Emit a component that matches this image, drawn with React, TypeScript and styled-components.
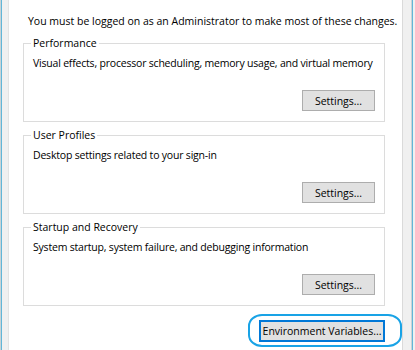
import React from 'react';
import styled, { createGlobalStyle } from 'styled-components';

const GlobalStyle = createGlobalStyle`
  html, body {
    margin: 0;
    padding: 0;
    background: #f0f0f0;
  }
  body {
    font-family: "Open Sans", "Noto Sans", "Liberation Sans", sans-serif;
    font-size: 10.5px;
    color: #000;
  }
`;

interface Section {
  title: string;
  description: string;
}

const sections: Section[] = [
  {
    title: 'Performance',
    description: 'Visual effects, processor scheduling, memory usage, and virtual memory',
  },
  {
    title: 'User Profiles',
    description: 'Desktop settings related to your sign-in',
  },
  {
    title: 'Startup and Recovery',
    description: 'System startup, system failure, and debugging information',
  },
];

const App: React.FC = () => {
  return (
    <>
      <GlobalStyle />
      <Screen>
        <DesktopEdge />
        <Gutter $width={6} />
        <Sheet>
          <Notice>You must be logged on as an Administrator to make most of these changes.</Notice>
          {sections.map((s) => (
            <GroupBox key={s.title}>
              <GroupTitle>{s.title}</GroupTitle>
              <Description>{s.description}</Description>
              <ButtonRow>
                <Button>Settings...</Button>
              </ButtonRow>
            </GroupBox>
          ))}
          <FooterRow>
            <Highlight>
              <DefaultButton>Environment Variables...</DefaultButton>
            </Highlight>
          </FooterRow>
        </Sheet>
        <Gutter $width={8} />
        <DesktopEdge />
        <Gutter $width={2} />
      </Screen>
    </>
  );
};

export default App;

const Screen = styled.div`
  display: flex;
  height: 350px;
  overflow: hidden;
  background: #f0f0f0;
`;

const DesktopEdge = styled.div`
  width: 1px;
  flex: none;
  background: #62b6d8;
  border-left: 1px solid #c9d3d6;
`;

const Gutter = styled.div<{ $width: number }>`
  width: ${(p) => p.$width}px;
  flex: none;
  background: #f0f0f0;
`;

const Sheet = styled.div`
  flex: 1;
  min-width: 0;
  display: flex;
  flex-direction: column;
  background: #fff;
  border-left: 1px solid #e3e3e3;
  border-right: 1px solid #dadada;
  padding: 14px 17px 0 14px;
`;

const Notice = styled.div`
  line-height: 15px;
  padding-left: 5px;
  margin-bottom: 7px;
  white-space: nowrap;
`;

const GroupBox = styled.fieldset`
  margin: 0 0 6px 0;
  padding: 0 9px 10px 9px;
  border: 1px solid #dcdcdc;
`;

const GroupTitle = styled.legend`
  padding: 0 2px;
  margin-left: -2px;
  line-height: 14px;
`;

const Description = styled.div`
  line-height: 15px;
  margin-top: 6px;
  white-space: nowrap;
  letter-spacing: -0.2px;
`;

const ButtonRow = styled.div`
  margin-top: 19px;
  display: flex;
  justify-content: flex-end;
`;

const Button = styled.button`
  width: 73px;
  height: 21px;
  padding: 0;
  background: #e1e1e1;
  border: 1px solid #adadad;
  font: inherit;
  color: #000;
`;

const FooterRow = styled.div`
  display: flex;
  justify-content: flex-end;
  margin-top: 8px;
`;

const Highlight = styled.div`
  position: relative;
  &::after {
    content: '';
    position: absolute;
    top: -6px;
    bottom: -5px;
    left: -11px;
    right: -17px;
    border: 2px solid #19a3e6;
    border-radius: 14px / 12px;
    pointer-events: none;
  }
`;

const DefaultButton = styled(Button)`
  width: 126px;
  height: 22px;
  border: 2px solid #0078d7;
  white-space: nowrap;
`;
